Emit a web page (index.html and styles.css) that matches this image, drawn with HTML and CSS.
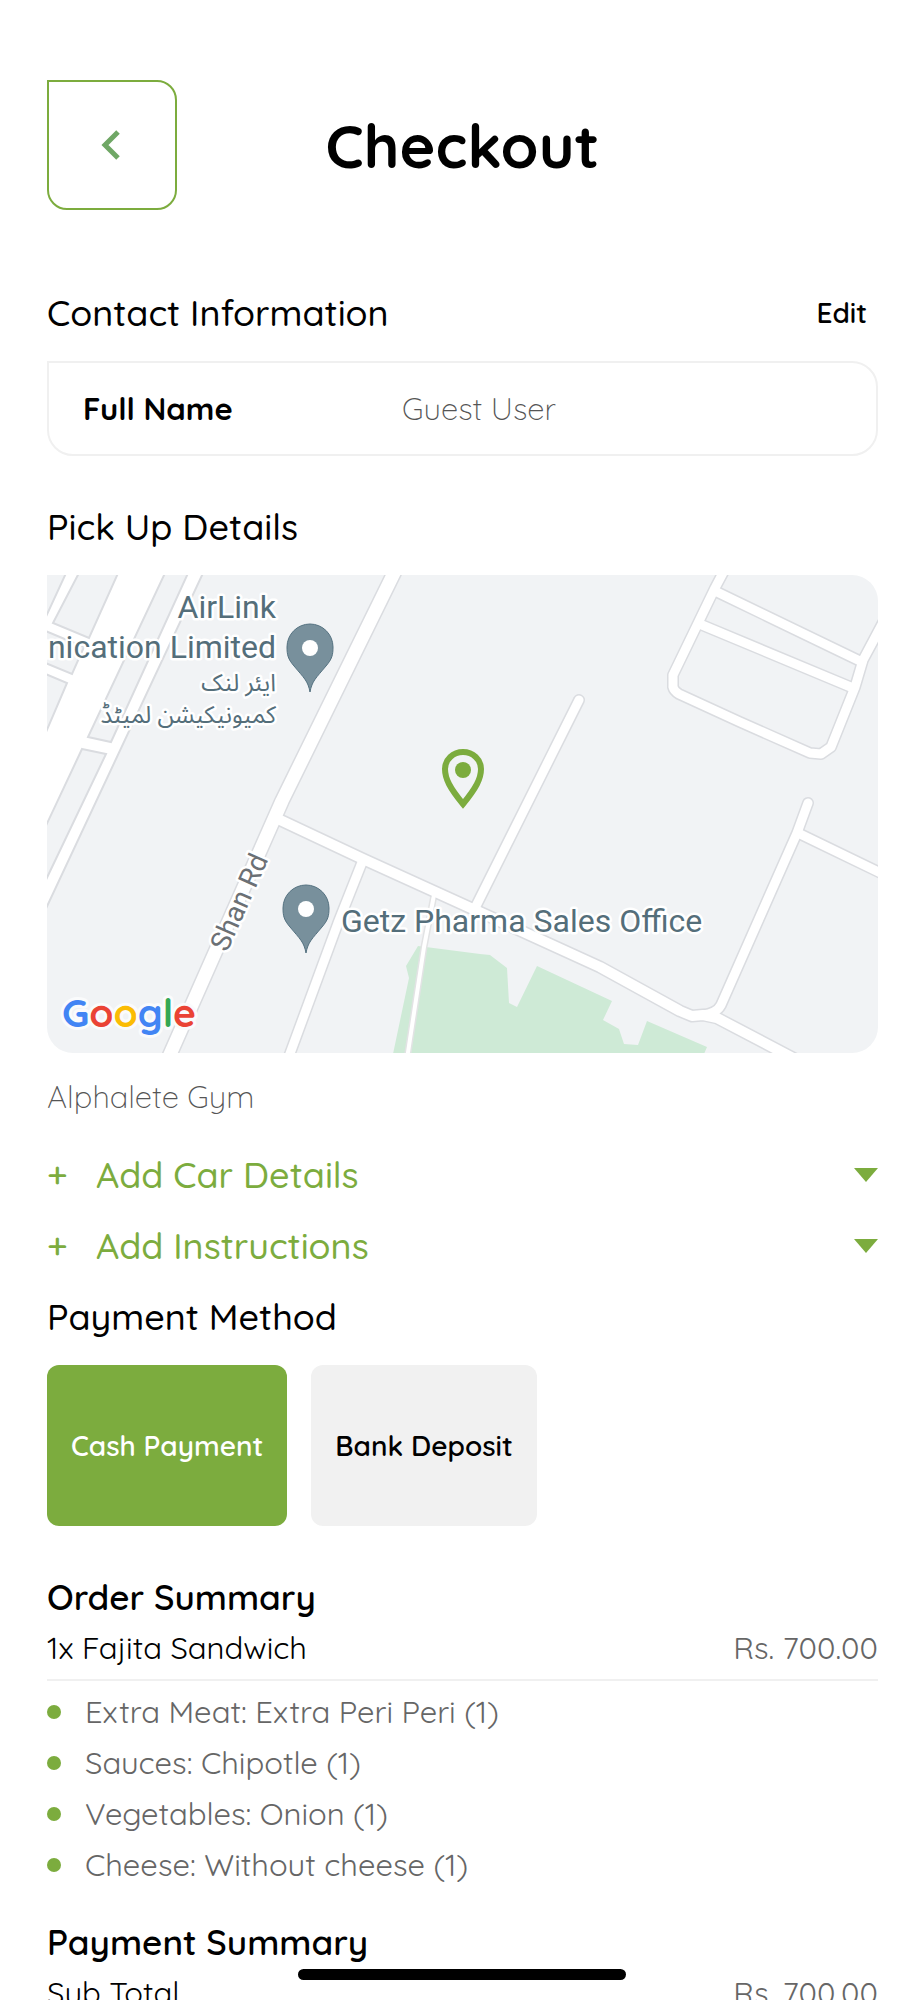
FILE: index.html
```html
<!DOCTYPE html>
<html lang="en">
<head>
    <meta charset="UTF-8">
    <meta name="viewport" content="width=device-width, initial-scale=1.0">
    <title>Checkout</title>
    <link rel="stylesheet" href="styles.css">
</head>
<body>
    <main class="screen">
        <header class="header">
            <button class="back" type="button" aria-label="Back">
                <svg width="22" height="30" viewBox="0 0 22 30"><path d="M17 2 L4 15 L17 28" fill="none" stroke="#6fa765" stroke-width="5"/></svg>
            </button>
            <h1>Checkout</h1>
        </header>

        <section class="section first">
            <div class="row">
                <h2>Contact Information</h2>
                <button class="edit" type="button">Edit</button>
            </div>
            <dl class="card">
                <dt>Full Name</dt>
                <dd>Guest User</dd>
            </dl>
        </section>

        <section class="section">
            <h2>Pick Up Details</h2>
            <svg class="map" viewBox="0 0 831 478" role="img" aria-label="Map">
                <rect width="831" height="478" fill="#f1f3f5"/>
                <path d="M371 371 L433 379 L443 380 L460 393 L462 428 L470 432 L490 391 L565 426 L556 445 L572 454 L577 469 L591 470 L600 446 L660 472 L657 479 L346 479 L362 403 L359 391 Z" fill="#ceead6"/>

                <!-- highway and the blocks around it -->
                <path d="M-4 -4 H157 L-4 340 Z" fill="#fff" stroke="#dadce0" stroke-width="2"/>
                <g fill="#f1f3f5" stroke="#dadce0" stroke-width="2">
                    <path d="M-4 -4 H20 L-4 48 Z"/>
                    <path d="M33 -4 H72 L42 63 L6 48 Z"/>
                    <path d="M-4 55 L37 72 L25 99 L-4 87 Z"/>
                    <path d="M-4 98 L20 108 L-4 164 Z"/>
                    <path d="M119 -4 H142 L64 167 L41 162 Z"/>
                    <path d="M35 174 L59 179 L-4 311 V257 Z"/>
                </g>

                <!-- road borders, then the road surface over them -->
                <g fill="none" stroke-linecap="round" stroke-linejoin="round">
                    <path d="M387 320 L377 372 L360 484" stroke="#e2e3e4" stroke-width="7"/>
                    <g stroke="#dadce0" stroke-width="12">
                        <path d="M348 -4 L235 226 L121 484" stroke-width="16"/>
                        <path d="M231 244 L316 284 L426 334 L553 392 L633 436 L645 441 L656 440 L670 443 L748 484" stroke-width="13"/>
                        <path d="M316 285 L291 348 L241 484"/>
                        <path d="M532 125 L427 335"/>
                        <path d="M761 228 L750 258 L674 430 Q670 438 656 440"/>
                        <path d="M751 258 L840 301"/>
                        <path d="M677 -4 L668 13 L626 100 V112 Q627 116 632 119 L693 147 L763 178 L774 179 L784 172 L808 112 L816 85 L840 40"/>
                        <path d="M670 17 L815 87"/>
                        <path d="M655 50 L806 113"/>
                    </g>
                    <g stroke="#fff" stroke-width="9">
                        <path d="M348 -4 L235 226 L121 484" stroke-width="13"/>
                        <path d="M231 244 L316 284 L426 334 L553 392 L633 436 L645 441 L656 440 L670 443 L748 484" stroke-width="10"/>
                        <path d="M316 285 L291 348 L241 484"/>
                        <path d="M532 125 L427 335"/>
                        <path d="M761 228 L750 258 L674 430 Q670 438 656 440"/>
                        <path d="M751 258 L840 301"/>
                        <path d="M677 -4 L668 13 L626 100 V112 Q627 116 632 119 L693 147 L763 178 L774 179 L784 172 L808 112 L816 85 L840 40"/>
                        <path d="M670 17 L815 87"/>
                        <path d="M655 50 L806 113"/>
                    </g>
                    <path d="M387 320 L377 372 L360 484" stroke="#fff" stroke-width="4"/>
                </g>

                <!-- grey place pins -->
                <g fill="#78909c" stroke="#547180" stroke-width="1">
                    <path d="M263 117 C261 106 257 103 247 91 C241 84 240 80 240 72 A23 23 0 0 1 286 72 C286 80 285 84 279 91 C269 103 265 106 263 117 Z"/>
                    <path d="M259 378 C257 367 253 364 243 352 C237 345 236 341 236 333 A23 23 0 0 1 282 333 C282 341 281 345 275 352 C265 364 261 367 259 378 Z"/>
                </g>
                <circle cx="263" cy="73" r="8" fill="#fff"/>
                <circle cx="259" cy="334" r="8" fill="#fff"/>

                <!-- pick up pin -->
                <path d="M416 229 C403 213 398 204 398 194 A18 17 0 0 1 434 194 C434 204 429 213 416 229 Z" fill="none" stroke="#7cac3e" stroke-width="6"/>
                <circle cx="416" cy="195" r="8" fill="#7cac3e"/>

                <g class="place">
                    <text x="229" y="43" text-anchor="end">AirLink</text>
                    <text x="229" y="83" text-anchor="end">Communication Limited</text>
                    <text class="urdu" x="229" y="116" direction="rtl">ایئر لنک</text>
                    <text class="urdu" x="229" y="148" direction="rtl">کمیونیکیشن لمیٹڈ</text>
                    <text x="294" y="357">Getz Pharma Sales Office</text>
                    <text class="street" transform="translate(180 378) rotate(-66)">Shan Rd</text>
                </g>
                <text class="google" x="15" y="452"><tspan fill="#4285f4">G</tspan><tspan fill="#ea4335">o</tspan><tspan fill="#fbbc04">o</tspan><tspan fill="#4285f4">g</tspan><tspan fill="#34a853">l</tspan><tspan fill="#ea4335">e</tspan></text>
            </svg>
            <p class="branch">Alphalete Gym</p>
            <button class="add" type="button">
                <span class="plus">+</span>Add Car Details
                <svg class="arrow" width="24" height="14" viewBox="0 0 24 14"><path d="M0 0 H24 L12 14 Z" fill="#7cac3e"/></svg>
            </button>
            <button class="add" type="button">
                <span class="plus">+</span>Add Instructions
                <svg class="arrow" width="24" height="14" viewBox="0 0 24 14"><path d="M0 0 H24 L12 14 Z" fill="#7cac3e"/></svg>
            </button>
        </section>

        <section class="section payment">
            <h2>Payment Method</h2>
            <div class="methods">
                <button class="method active" type="button">Cash Payment</button>
                <button class="method" type="button">Bank Deposit</button>
            </div>
        </section>

        <section class="section">
            <h2 class="bold">Order Summary</h2>
            <div class="item line">
                <span>1x Fajita Sandwich</span>
                <span class="price">Rs. 700.00</span>
            </div>
            <ul class="options">
                <li>Extra Meat: Extra Peri Peri (1)</li>
                <li>Sauces: Chipotle (1)</li>
                <li>Vegetables: Onion (1)</li>
                <li>Cheese: Without cheese (1)</li>
            </ul>
        </section>

        <section class="section total">
            <h2 class="bold">Payment Summary</h2>
            <div class="item">
                <span>Sub Total</span>
                <span class="price">Rs. 700.00</span>
            </div>
        </section>
    </main>
    <div class="home-bar"></div>
</body>
</html>
```
FILE: styles.css
```css
* {
    box-sizing: border-box;
}
body {
    margin: 0;
    background-color: #fff;
    color: #000;
    font-family: Quicksand, Lato, sans-serif;
    font-size: 31px;
    line-height: 40px;
}
button {
    font-family: inherit;
    border: none;
    background: none;
    padding: 0;
    color: #000;
    cursor: pointer;
}
h1, h2, p, dl, dd, ul {
    margin: 0;
    padding: 0;
}
.screen {
    height: 100vh;
    padding: 80px 46px 0 47px;
    overflow-y: auto;
    scrollbar-width: none;
}
.header {
    display: grid;
    grid-template-columns: 130px 1fr 130px;
    align-items: center;
}
.back {
    display: flex;
    align-items: center;
    justify-content: center;
    height: 130px;
    border: 2px solid #7cac3e;
    border-radius: 0 20px 20px 20px;
}
h1 {
    font-size: 61px;
    line-height: 72px;
    font-weight: bold;
    text-align: center;
}
h2 {
    font-size: 36px;
    line-height: 48px;
    font-weight: 500;
}
.bold {
    font-size: 35px;
    font-weight: 600;
}
.section {
    margin-top: 47px;
}
.first {
    margin-top: 79px;
}
.row {
    display: flex;
    align-items: center;
    justify-content: space-between;
    padding-right: 11px;
}
.edit {
    font-size: 28px;
    line-height: 40px;
    font-weight: 600;
}
.card {
    display: grid;
    grid-template-columns: 319px 1fr;
    margin-top: 24px;
    padding: 26px 34px 25px;
    border: 2px solid #f0f0f0;
    border-radius: 0 26px 26px 26px;
}
.card dt {
    font-weight: bold;
}
.card dd {
    color: #555;
    font-weight: 300;
}
.map {
    display: block;
    width: 100%;
    margin-top: 24px;
    border-radius: 0 26px 26px 26px;
}
.place text {
    font-family: Roboto, sans-serif;
    font-size: 32px;
    fill: #546e7a;
    stroke: #fff;
    stroke-width: 5px;
    stroke-linejoin: round;
    paint-order: stroke;
}
.place .urdu {
    font-family: "Noto Sans Arabic", "DejaVu Sans", sans-serif;
    font-size: 24px;
}
.place .street {
    font-size: 28px;
    fill: #6b7075;
}
.google {
    font-family: Quicksand, Lato, sans-serif;
    font-size: 39px;
    font-weight: bold;
    stroke: #fafbfc;
    stroke-width: 6px;
    stroke-linejoin: round;
    paint-order: stroke;
}
.branch {
    margin-top: 24px;
    margin-bottom: 34px;
    color: #555;
    font-weight: 300;
}
.add {
    display: flex;
    align-items: center;
    width: 100%;
    margin-top: 23px;
    color: #7cac3e;
    font-size: 36px;
    line-height: 48px;
    font-weight: 500;
}
.plus {
    width: 49px;
    text-align: left;
}
.arrow {
    margin-left: auto;
}
.payment {
    margin-top: 23px;
}
.methods {
    display: flex;
    gap: 24px;
    margin-top: 24px;
}
.method {
    padding: 61px 24px 60px;
    border-radius: 12px;
    background-color: #f1f1f1;
    font-size: 28px;
    line-height: 40px;
    font-weight: 600;
}
.method.active {
    background-color: #7cac3e;
    color: #fff;
}
.item {
    display: flex;
    justify-content: space-between;
    margin-top: 7px;
}
.line {
    padding-bottom: 11px;
    border-bottom: 2px solid #f0f0f0;
}
.price {
    color: #666;
}
.options {
    display: grid;
    gap: 11px;
    margin-top: 11px;
    list-style: none;
    color: #666;
}
.options li {
    display: flex;
    align-items: center;
    gap: 24px;
}
.options li::before {
    content: "";
    width: 14px;
    height: 14px;
    border-radius: 50%;
    background-color: #7cac3e;
}
.total {
    margin-top: 33px;
}
.home-bar {
    position: fixed;
    bottom: 20px;
    left: 50%;
    width: 328px;
    height: 11px;
    margin-left: -164px;
    border-radius: 6px;
    background-color: #000;
}
```
